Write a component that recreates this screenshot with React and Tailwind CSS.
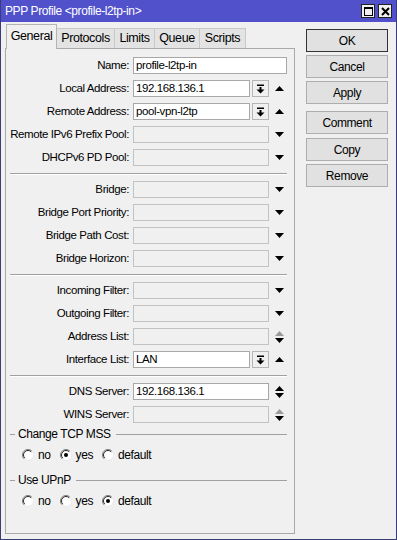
import React from "react";

const rowsA = [
  { label: "Name:", value: "profile-l2tp-in", kind: "text" },
  { label: "Local Address:", value: "192.168.136.1", kind: "list" },
  { label: "Remote Address:", value: "pool-vpn-l2tp", kind: "list" },
  { label: "Remote IPv6 Prefix Pool:", kind: "off" },
  { label: "DHCPv6 PD Pool:", kind: "off" },
];

const rowsB = [
  { label: "Bridge:", kind: "off" },
  { label: "Bridge Port Priority:", kind: "off" },
  { label: "Bridge Path Cost:", kind: "off" },
  { label: "Bridge Horizon:", kind: "off" },
];

const rowsC = [
  { label: "Incoming Filter:", kind: "off" },
  { label: "Outgoing Filter:", kind: "off" },
  { label: "Address List:", kind: "offud" },
  { label: "Interface List:", value: "LAN", kind: "list" },
];

const rowsD = [
  { label: "DNS Server:", value: "192.168.136.1", kind: "ud" },
  { label: "WINS Server:", kind: "offud" },
];

function Up({ gray }) {
  return (
    <svg width="9" height="5" viewBox="0 0 9 5">
      <polygon points="0,5 9,5 4.5,0" fill={gray ? "#9a9a9a" : "#000"} />
    </svg>
  );
}

function Down() {
  return (
    <svg width="9" height="5" viewBox="0 0 9 5">
      <polygon points="0,0 9,0 4.5,5" fill="#000" />
    </svg>
  );
}

function ListBtn() {
  return (
    <div className="ml-[2px] flex h-[17px] w-[17px] items-center justify-center border border-[#b5b5b5] bg-[#f0f0f0]">
      <svg width="9" height="10" viewBox="0 0 9 10">
        <rect x="1" y="0.5" width="7" height="1.5" fill="#000" />
        <rect x="3.5" y="3" width="2" height="3" fill="#000" />
        <polygon points="0.5,5.5 8.5,5.5 4.5,9.5" fill="#000" />
      </svg>
    </div>
  );
}

function Field({ label, value, kind }) {
  const white = kind === "text" || kind === "list" || kind === "ud";
  const width =
    kind === "text" ? "w-[154px]" : kind === "list" ? "w-[117px]" : "w-[136px]";
  return (
    <div className="flex h-[23px] items-center">
      <div className="w-[123px] whitespace-nowrap text-right">{label}</div>
      <div
        className={`ml-[4px] flex h-[17px] items-center border px-[2px] ${width} ${
          white ? "border-[#a8a8a8] bg-white" : "border-[#c2c2c2] bg-[#f0f0f0]"
        }`}
      >
        {value}
      </div>
      {kind === "list" && <ListBtn />}
      {kind !== "text" && (
        <div className="ml-[6px] flex w-[9px] flex-col items-center gap-[2px]">
          {kind === "list" && <Up />}
          {kind === "off" && <Down />}
          {kind === "ud" && (
            <>
              <Up />
              <Down />
            </>
          )}
          {kind === "offud" && (
            <>
              <Up gray />
              <Down />
            </>
          )}
        </div>
      )}
    </div>
  );
}

function Sep() {
  return (
    <div className="h-[9px] pt-[4px] pl-[4px]">
      <div className="h-[2px] w-[277px] border-t border-b border-t-[#a0a0a0] border-b-white" />
    </div>
  );
}

function Radio({ checked, label }) {
  return (
    <div className="flex items-center">
      <svg width="12" height="12" viewBox="0 0 12 12">
        <circle cx="6" cy="6" r="5.5" fill="#fff" />
        <path d="M2.1 9.9 A5.5 5.5 0 0 1 9.9 2.1" fill="none" stroke="#7a7a7a" strokeWidth="1" />
        <path d="M2.8 9.2 A4.5 4.5 0 0 1 9.2 2.8" fill="none" stroke="#2a2a2a" strokeWidth="1" />
        <path d="M9.9 2.1 A5.5 5.5 0 0 1 2.1 9.9" fill="none" stroke="#e8e8e8" strokeWidth="1" />
        {checked && <circle cx="6" cy="6" r="2" fill="#000" />}
      </svg>
      <span className="ml-[4px] text-[12px]">{label}</span>
    </div>
  );
}

function Group({ title, value }) {
  return (
    <>
      <div className="flex h-[16px] items-center pl-[4px] pr-[7px]">
        <div className="h-px w-[5px] bg-[#a0a0a0]" />
        <span className="ml-[3px] text-[12px]">{title}</span>
        <div className="ml-[5px] h-px flex-1 bg-[#a0a0a0]" />
      </div>
      <div className="flex h-[26px] items-center gap-[9px] pl-[16px]">
        {["no", "yes", "default"].map((o) => (
          <Radio key={o} label={o} checked={o === value} />
        ))}
      </div>
    </>
  );
}

const tabs = [
  { name: "General", w: "w-[51px]" },
  { name: "Protocols", w: "w-[58px]" },
  { name: "Limits", w: "w-[40px]" },
  { name: "Queue", w: "w-[45px]" },
  { name: "Scripts", w: "w-[46px]" },
];

function Btn({ children, def, className = "" }) {
  return (
    <div
      className={`flex h-[23px] w-[82px] items-center justify-center border bg-[#e1e1e1] text-[12px] ${
        def ? "border-[#333]" : "border-[#adadad]"
      } ${className}`}
    >
      {children}
    </div>
  );
}

export default function App() {
  return (
    <div className="flex h-[540px] w-[397px] flex-col border-x border-b border-[#3b3b7a] bg-[#f0f0f0] font-['Liberation_Sans',Arial,sans-serif] text-[11.5px] tracking-[-0.4px] text-black">
      {/* title bar */}
      <div className="flex h-[22px] items-center justify-between bg-[#5151cb] pl-[4px] pr-[4px] text-white">
        <span className="text-[12px]">PPP Profile &lt;profile-l2tp-in&gt;</span>
        <div className="flex gap-[3px]">
          <div className="flex h-[14px] w-[14px] items-center justify-center border border-[#222] bg-[#f0f0f0]">
            <div className="h-[9px] w-[9px] border border-t-2 border-black" />
          </div>
          <div className="flex h-[14px] w-[14px] items-center justify-center border border-[#222] bg-[#f0f0f0]">
            <svg width="9" height="9" viewBox="0 0 9 9">
              <path d="M1 1 L8 8 M8 1 L1 8" stroke="#000" strokeWidth="2" />
            </svg>
          </div>
        </div>
      </div>

      <div className="flex flex-1 pl-[4px] pt-[2px] pb-[5px]">
        {/* left: tabs + panel */}
        <div className="flex w-[290px] flex-col">
          <div className="flex h-[24px] items-end pl-[1px]">
            {tabs.map((t, i) =>
              i === 0 ? (
                <div
                  key={t.name}
                  className={`relative z-10 -mb-px flex h-[25px] ${t.w} items-center justify-center border-x border-t border-[#b4b4b4] bg-[#f0f0f0] pb-[2px] text-[12.5px]`}
                >
                  {t.name}
                </div>
              ) : (
                <div
                  key={t.name}
                  className={`flex h-[20px] ${t.w} items-center justify-center border-t border-r border-[#c8c8c8] bg-[#e3e3e3] text-[12.5px]`}
                >
                  {t.name}
                </div>
              )
            )}
          </div>
          <div className="flex-1 border border-[#a9a9a9] pt-[5px]">
            {rowsA.map((r) => (
              <Field key={r.label} {...r} />
            ))}
            <Sep />
            {rowsB.map((r) => (
              <Field key={r.label} {...r} />
            ))}
            <Sep />
            {rowsC.map((r) => (
              <Field key={r.label} {...r} />
            ))}
            <Sep />
            {rowsD.map((r) => (
              <Field key={r.label} {...r} />
            ))}
            <Group title="Change TCP MSS" value="yes" />
            <div className="mt-[4px]" />
            <Group title="Use UPnP" value="default" />
          </div>
        </div>

        {/* right: buttons */}
        <div className="ml-[11px] flex flex-col gap-[3px] pt-[5px]">
          <Btn def>OK</Btn>
          <Btn>Cancel</Btn>
          <Btn>Apply</Btn>
          <Btn className="mt-[4px]">Comment</Btn>
          <Btn className="mt-px">Copy</Btn>
          <Btn>Remove</Btn>
        </div>
      </div>
    </div>
  );
}
